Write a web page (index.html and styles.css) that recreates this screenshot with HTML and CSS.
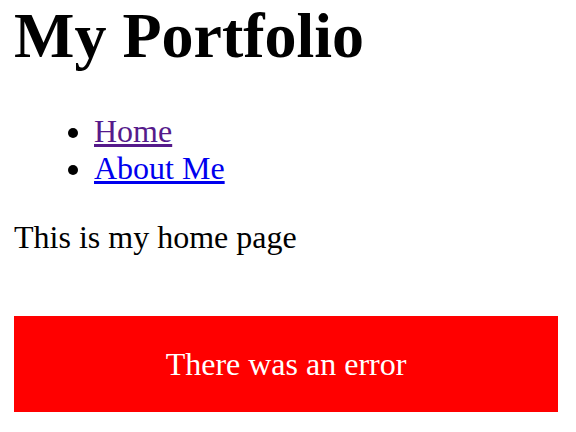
FILE: index.html
```html
<!DOCTYPE html>
<html lang="en">
<head>
<meta charset="utf-8">
<title>My Portfolio</title>
<link rel="stylesheet" href="styles.css">
</head>
<body>
<h1 class="title">My Portfolio</h1>
<ul class="nav">
  <li><a class="nav-link visited" href="#home">Home</a></li>
  <li><a class="nav-link" href="#about">About Me</a></li>
</ul>
<p class="intro">This is my home page</p>
<div class="error">There was an error</div>
</body>
</html>
```
FILE: styles.css
```css
html, body {
  background: #fff;
}
body {
  margin: 0 18px 0 14px;
  font-family: "Liberation Serif", "Times New Roman", serif;
  font-size: 32px;
  color: #000;
}
.title {
  font-size: 64px;
  font-weight: bold;
  line-height: 71px;
  margin: 0;
}
.nav {
  margin: 42px 0 0;
  padding-left: 80px;
}
.nav-link {
  color: #0000ee;
  text-decoration: underline;
}
.nav-link.visited {
  color: #551a8b;
}
.intro {
  margin: 32px 0 0;
}
.error {
  margin-top: 60px;
  background: #ff0000;
  color: #fff;
  text-align: center;
  height: 96px;
  line-height: 96px;
}
```
